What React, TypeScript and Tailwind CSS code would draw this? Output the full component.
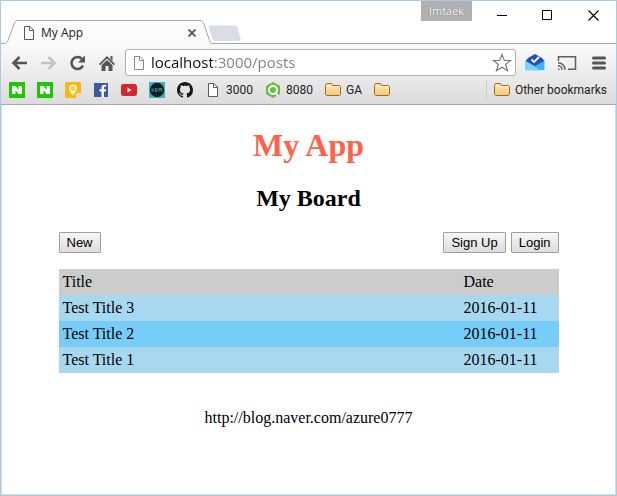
import React from "react";

const posts = [
  { id: 3, title: "Test Title 3", date: "2016-01-11" },
  { id: 2, title: "Test Title 2", date: "2016-01-11" },
  { id: 1, title: "Test Title 1", date: "2016-01-11" },
];

const PageIcon = ({ stroke = "#5a5a5a" }: { stroke?: string }) => (
  <svg width="16" height="16" viewBox="0 0 16 16" fill="#fff" stroke={stroke}>
    <path d="M3.5 1.5h5.5l3.5 3.5v9.5h-9z" />
    <path d="M8.5 1.5v4h4" fill="none" />
  </svg>
);

const FolderIcon = () => (
  <svg width="16" height="16" viewBox="0 0 16 16">
    <defs>
      <linearGradient id="folder" x1="0" y1="0" x2="0" y2="1">
        <stop offset="0" stopColor="#ffe6b0" />
        <stop offset="1" stopColor="#fbc977" />
      </linearGradient>
    </defs>
    <path
      d="M.5 12.500v-9l1-2h5l1 2h7l1 1v8l-1 1h-13z"
      fill="url(#folder)"
      stroke="#9c6b31"
    />
    <path d="M1.500 4.500h13" stroke="#fff3d4" />
  </svg>
);

const NaverIcon = () => (
  <svg width="16" height="16" viewBox="0 0 16 16">
    <path d="M0 0h16v16H0z" fill="#1ec800" />
    <path d="M3 4h3.500l3 4V4h3.500v8H9.500l-3-4v4H3z" fill="#fff" />
  </svg>
);

const KeepIcon = () => (
  <svg width="16" height="16" viewBox="0 0 16 16">
    <path d="M1 0h14l1 1v10l-5 5H1l-1-1V1z" fill="#f5b912" />
    <path d="M11 16v-5h5z" fill="#fff" opacity=".55" />
    <path
      d="M6 9.500C4 8 4 3 8 3s4 5 2 6.500z"
      fill="#f9cf57"
      stroke="#fff"
      strokeWidth="1.200"
    />
    <path d="M6 10.500h4M6.500 12h3" fill="none" stroke="#fff" />
  </svg>
);

const FacebookIcon = () => (
  <svg width="16" height="16" viewBox="0 0 16 16">
    <path d="M1 1h14v14H1z" fill="#3f5a9b" />
    <path
      d="M8.500 15V9.500H6.500V7.300h2V5.700C8.500 3.700 9.600 2.700 11.500 2.700l1.700.1v2h-1.200c-.9 0-1.100.5-1.100 1.100v1.400h2.200l-.3 2.200h-1.900V15z"
      fill="#fff"
    />
  </svg>
);

const YoutubeIcon = () => (
  <svg width="16" height="16" viewBox="0 0 16 16">
    <rect y="2" width="16" height="12" rx="2.500" fill="#d9252a" />
    <path d="M6.500 5.500v5l4-2.500z" fill="#fff" />
  </svg>
);

const BadgeIcon = () => (
  <svg width="16" height="16" viewBox="0 0 16 16">
    <path d="M0 0h16v16H0z" fill="#36b3c4" />
    <circle cx="8" cy="8" r="7.200" fill="#101c20" />
    <path
      d="M3 6.500v3M3 8l2-1.500M3 8l2 1.500M6.500 6.500h1.500v3H6.500zM10 9.500v-3h1.500v1.500H10M13.500 6.500h-1v3h1"
      fill="none"
      stroke="#3d8794"
    />
  </svg>
);

const GithubIcon = () => (
  <svg width="16" height="16" viewBox="0 0 16 16" fill="#161616">
    <path d="M8 0C3.580 0 0 3.580 0 8c0 3.540 2.290 6.530 5.470 7.590.4.070.55-.17.55-.38 0-.19-.01-.82-.01-1.490-2.010.37-2.530-.49-2.690-.94-.09-.23-.48-.94-.82-1.130-.28-.15-.68-.52-.01-.53.63-.01 1.080.58 1.230.82.72 1.210 1.870.87 2.330.66.07-.52.28-.87.51-1.070-1.780-.2-3.640-.89-3.640-3.950 0-.87.31-1.590.82-2.150-.08-.2-.36-1.020.08-2.120 0 0 .67-.21 2.200.82.64-.18 1.320-.27 2-.27s1.360.09 2 .27c1.530-1.040 2.200-.82 2.200-.82.44 1.100.16 1.920.08 2.120.51.56.82 1.270.82 2.150 0 3.070-1.870 3.750-3.650 3.950.29.25.54.73.54 1.480 0 1.070-.01 1.930-.01 2.200 0 .21.15.46.55.38A8.010 8.010 0 0 0 16 8c0-4.420-3.580-8-8-8z" />
  </svg>
);

const HexIcon = () => (
  <svg width="16" height="16" viewBox="0 0 16 16">
    <path d="M8 .5l6.500 3.500v8L8 15.500 1.500 12V4z" fill="#6abf4b" stroke="#6abf4b" strokeLinejoin="round" />
    <circle cx="8" cy="8" r="4" fill="none" stroke="#fff" strokeWidth="1.800" />
    <path d="M10 10l3 4" stroke="#fff" strokeWidth="2" />
  </svg>
);

const bookmarks = [
  { name: "Naver", icon: <NaverIcon /> },
  { name: "Naver Blog", icon: <NaverIcon /> },
  { name: "Keep", icon: <KeepIcon /> },
  { name: "Facebook", icon: <FacebookIcon /> },
  { name: "YouTube", icon: <YoutubeIcon /> },
  { name: "Club", icon: <BadgeIcon /> },
  { name: "GitHub", icon: <GithubIcon /> },
  { name: "3000", icon: <PageIcon />, label: "3000" },
  { name: "8080", icon: <HexIcon />, label: "8080" },
  { name: "GA", icon: <FolderIcon />, label: "GA" },
  { name: "Folder", icon: <FolderIcon /> },
];

const TitleBar = () => (
  <header className="flex h-[43px] items-end bg-white">
    <div className="flex h-6 items-stretch">
      <svg width="17" height="24" viewBox="0 0 17 24">
        <path d="M0 23.500h3c2 0 3-1 4-3L13 4c1-2.500 2-3.500 4-3.500V24H0z" fill="#fbfbfb" />
        <path d="M0 23.500h3c2 0 3-1 4-3L13 4c1-2.500 2-3.500 4-3.500" fill="none" stroke="#a6a6a6" />
      </svg>
      <div className="flex w-[182px] items-center gap-1 border-t border-[#a6a6a6] bg-[#fbfbfb] pl-[3px]">
        <PageIcon />
        <span className="flex-1 text-[12px] text-[#222]">My App</span>
        <button aria-label="Close tab" className="flex size-4 items-center justify-center">
          <svg width="8" height="8" viewBox="0 0 8 8" stroke="#555" strokeWidth="1.800">
            <path d="M.5.5l7 7M7.500.5l-7 7" />
          </svg>
        </button>
      </div>
      <svg width="12" height="24" viewBox="0 0 12 24">
        <path d="M0 .5c2 0 3 1 4 3.500l5.500 16.500c.7 2 1.500 3 2.500 3V24H0z" fill="#fbfbfb" />
        <path d="M0 .5c2 0 3 1 4 3.500l5.500 16.500c.7 2 1.500 3 2.500 3" fill="none" stroke="#a6a6a6" />
      </svg>
    </div>
    <div className="flex h-full flex-1 items-start border-b border-[#a6a6a6]">
      <button aria-label="New tab" className="-ml-1 self-end">
        <svg width="34" height="18" viewBox="0 0 34 18">
          <path
            d="M3 .5h23c2 0 3 .5 3.500 2l3 11c.5 1.500 0 2.500-1.500 2.500H8c-2 0-3-.5-3.500-2L1 3C.5 1.500 1 .5 3 .5z"
            fill="#d9dee6"
          />
        </svg>
      </button>
      <span className="ml-auto mr-[7px] h-5 w-[51px] bg-[#b0b0b0] text-center text-[11px] leading-5 text-white [text-shadow:0_0_1px_#555]">
        Imtaek
      </span>
      <button aria-label="Minimize" className="flex h-[29px] w-[46px] items-center justify-center">
        <svg width="11" height="11" viewBox="0 0 11 11" stroke="#000">
          <path d="M0 5.500h10" />
        </svg>
      </button>
      <button aria-label="Maximize" className="flex h-[29px] w-[45px] items-center justify-center">
        <svg width="11" height="11" viewBox="0 0 11 11" fill="none" stroke="#000">
          <path d="M.5.5h9v9h-9z" />
        </svg>
      </button>
      <button aria-label="Close" className="flex h-[29px] w-[46px] items-center justify-center">
        <svg width="11" height="11" viewBox="0 0 11 11" stroke="#000" strokeWidth="1.100">
          <path d="M.5.5l10 10M10.500.5l-10 10" />
        </svg>
      </button>
    </div>
  </header>
);

const Toolbar = () => (
  <div className="flex items-center gap-[10px] px-[10px] pt-[5px]">
    <div className="flex items-center gap-[11px]">
      <button aria-label="Back">
        <svg width="18" height="18" viewBox="0 0 18 18" fill="none" stroke="#555" strokeWidth="2.600">
          <path d="M16 9H3M8.500 3L2.500 9l6 6" />
        </svg>
      </button>
      <button aria-label="Forward">
        <svg width="18" height="18" viewBox="0 0 18 18" fill="none" stroke="#c2c2c2" strokeWidth="2.600">
          <path d="M1 9h13M8.500 3l6 6-6 6" />
        </svg>
      </button>
      <button aria-label="Reload">
        <svg width="18" height="18" viewBox="0 0 18 18" fill="none" stroke="#555" strokeWidth="2.600">
          <path d="M14 11.500A6 6 0 1 1 13 5" />
          <path d="M16 1.500v7H9z" fill="#555" stroke="none" />
        </svg>
      </button>
      <button aria-label="Home">
        <svg width="18" height="18" viewBox="0 0 18 18" fill="#555">
          <path d="M9 2l8 8-1.200 1.200L9 4.600l-6.800 6.600L1 10z" />
          <path d="M9 6l5.500 5.300V17h-4v-5h-3v5h-4v-5.700z" />
          <path d="M12.500 2h2v5l-2-2z" />
        </svg>
      </button>
    </div>
    <div className="-ml-px flex h-[27px] flex-1 items-center rounded-[3px] border border-[#b0b0b0] bg-white pl-[5px] pr-[3px]">
      <PageIcon stroke="#8a8a8a" />
      <input
        type="text"
        aria-label="Address"
        defaultValue="localhost:3000/posts"
        className="ml-1 min-w-0 flex-1 bg-[linear-gradient(to_right,#111_62px,#808080_62px)] bg-clip-text text-[15px] text-transparent outline-none"
      />
      <button aria-label="Bookmark this page">
        <svg width="20" height="20" viewBox="0 0 20 20" fill="#fff" stroke="#777" strokeWidth="1.100">
          <path d="M10 1.500l2.300 6h6.200l-4.900 4 1.900 6.300L10 14.200l-5.500 3.600 1.900-6.300-4.900-4h6.200z" />
        </svg>
      </button>
    </div>
    <div className="-ml-px flex items-center gap-3">
      <button aria-label="Inbox">
        <svg width="20" height="20" viewBox="0 0 20 20">
          <path d="M.5 8L3 5l7-4 7 4 2.500 3L10 14z" fill="#2450bd" />
          <path d="M6.500 6.500l2.500 2.500 5-5" fill="none" stroke="#fff" strokeWidth="1.800" />
          <path d="M.5 8L10 13l9.500-5v9H.5z" fill="#3fb1f5" />
          <path d="M.5 17.500V8l15 9.500z" fill="#7fd3fb" />
        </svg>
      </button>
      <button aria-label="Cast">
        <svg width="20" height="20" viewBox="0 0 20 20" fill="none" stroke="#606060" strokeWidth="1.500">
          <path d="M1.500 8V3.700h17v12.600H11" />
          <path d="M1 9.700a7 7 0 0 1 7 7M1 12.700a4 4 0 0 1 4 4" />
          <path d="M1 15l2 2H1z" fill="#606060" stroke="none" />
        </svg>
      </button>
      <button aria-label="Menu" className="ml-[3px]">
        <svg width="14" height="14" viewBox="0 0 14 14" stroke="#555" strokeWidth="3" strokeLinecap="round">
          <path d="M1.500 2h11M1.500 7h11M1.500 12h11" />
        </svg>
      </button>
    </div>
  </div>
);

const BookmarksBar = () => (
  <nav
    aria-label="Bookmarks"
    className="flex h-7 items-center pl-2 pr-[9px] font-[Roboto,'Noto_Sans',sans-serif] text-[12px] text-[#222]"
  >
    <div className="flex flex-1 items-center gap-3">
      {bookmarks.map((item) => (
        <a key={item.name} href="#" aria-label={item.name} className="flex items-center gap-[5px]">
          {item.icon}
          {item.label}
        </a>
      ))}
    </div>
    <a href="#" className="flex items-center gap-[5px] whitespace-nowrap border-l border-[#c8cdd2] pl-[7px]">
      <FolderIcon />
      Other bookmarks
    </a>
  </nav>
);

const boardButton =
  "h-[21px] rounded-[1px] border border-[#a0a0a0] bg-linear-to-b from-[#f7f7f7] to-[#dddddd] px-[7px] font-['Liberation_Sans',Arial,sans-serif] text-[13px] leading-[19px]";

const Board = () => (
  <main className="flex flex-1 flex-col items-center border border-t-0 border-[#d9dcdf] px-4 pt-[22px] font-['Liberation_Serif','Times_New_Roman',serif] text-[16px] text-black">
    <h1 className="text-[32px] leading-[37px] font-bold text-[#ff6347]">My App</h1>
    <h2 className="mt-5 text-[24px] leading-7 font-bold">My Board</h2>
    <div className="mt-5 flex w-full max-w-[500px] gap-[5px]">
      <button className={boardButton}>New</button>
      <button className={`${boardButton} ml-auto`}>Sign Up</button>
      <button className={boardButton}>Login</button>
    </div>
    <table className="mt-4 w-full max-w-[500px] border-collapse text-left">
      <thead>
        <tr className="h-[26px] bg-[#cccccc]">
          <th className="px-1 font-normal">Title</th>
          <th className="w-[99px] px-1 font-normal">Date</th>
        </tr>
      </thead>
      <tbody>
        {posts.map((post) => (
          <tr key={post.id} className="h-[26px] bg-[#a8d8f0] even:bg-[#75cdf8]">
            <td className="px-1">{post.title}</td>
            <td className="px-1">{post.date}</td>
          </tr>
        ))}
      </tbody>
    </table>
    <a href="http://blog.naver.com/azure0777" className="mt-[33px] mb-6">
      http://blog.naver.com/azure0777
    </a>
  </main>
);

const App = () => {
  return (
    <div className="flex min-h-screen flex-col border border-[#a9c8ea] bg-white font-['Open_Sans','Noto_Sans',sans-serif]">
      <TitleBar />
      <div className="border-b border-[#aaa] bg-linear-to-b from-[#fbfbfb] to-[#dcdcdc]">
        <Toolbar />
        <BookmarksBar />
      </div>
      <Board />
    </div>
  );
};

export default App;
